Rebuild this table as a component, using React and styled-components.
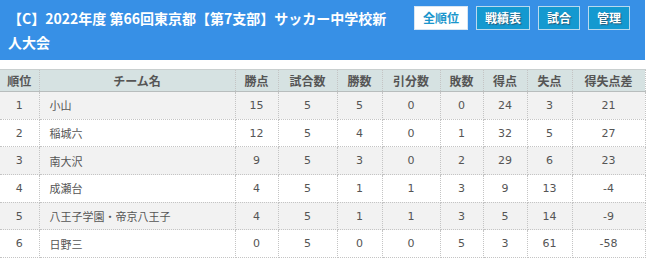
import React from "react";
import styled, { createGlobalStyle } from "styled-components";

const GlobalStyle = createGlobalStyle`
  body {
    margin: 0;
    background: #fff;
    font-family: "DejaVu Sans", "Noto Sans CJK JP", sans-serif;
  }
`;

const Page = styled.div`
  width: 645px;
`;

const TitleBar = styled.div`
  display: flex;
  align-items: flex-start;
  gap: 26px;
  height: 60px;
  box-sizing: border-box;
  padding: 6px 15px 0 8px;
  background: #3790e6;
`;

const Title = styled.h1`
  flex: 1;
  margin: 0;
  font-family: "Noto Sans CJK JP", sans-serif;
  font-size: 14px;
  font-weight: bold;
  line-height: 24px;
  color: #fff;
`;

const Buttons = styled.div`
  display: flex;
  gap: 8px;
  flex-shrink: 0;
`;

const NavButton = styled.a`
  display: block;
  height: 24px;
  box-sizing: border-box;
  padding: 0 8px;
  border: 1px solid ${({ $active }) => ($active ? "#d8e6f2" : "#b9d9ef")};
  background: ${({ $active }) => ($active ? "#fff" : "#1499d0")};
  color: ${({ $active }) => ($active ? "#1a96cc" : "#fff")};
  font-family: "Noto Sans CJK JP", sans-serif;
  font-size: 12px;
  font-weight: bold;
  line-height: 22px;
  text-shadow: ${({ $active }) => ($active ? "none" : "1px 1px 1px #245a78")};
  cursor: pointer;
`;

const Table = styled.table`
  width: 645px;
  margin-top: 9px;
  border-collapse: collapse;
  table-layout: fixed;
  border-top: 1px solid #c9cfcf;
  font-size: 11px;
  color: #555;
`;

const Th = styled.th`
  height: 21px;
  padding: 0;
  background: #d6e2e2;
  border-right: 1px dotted #c4c4c4;
  border-bottom: 1px solid #b8bdbd;
  font-family: "Noto Sans CJK JP", sans-serif;
  font-size: 12px;
  font-weight: bold;
  color: #555;
  text-align: center;
`;

const Row = styled.tr`
  background: ${({ $odd }) => ($odd ? "#f2f2f2" : "#fff")};
`;

const Td = styled.td`
  height: 26.7px;
  padding: ${({ $left }) => ($left ? "0 0 0 10px" : "0")};
  border-right: 1px dotted #c4c4c4;
  border-bottom: 1px dotted #c4c4c4;
  text-align: ${({ $left }) => ($left ? "left" : "center")};
  white-space: nowrap;
`;

const widths = [39, 196, 43, 59, 45, 58, 43, 44, 45, 73];
const heads = ["順位", "チーム名", "勝点", "試合数", "勝数", "引分数", "敗数", "得点", "失点", "得失点差"];

const rows = [
  [1, "小山", 15, 5, 5, 0, 0, 24, 3, 21],
  [2, "稲城六", 12, 5, 4, 0, 1, 32, 5, 27],
  [3, "南大沢", 9, 5, 3, 0, 2, 29, 6, 23],
  [4, "成瀬台", 4, 5, 1, 1, 3, 9, 13, -4],
  [5, "八王子学園・帝京八王子", 4, 5, 1, 1, 3, 5, 14, -9],
  [6, "日野三", 0, 5, 0, 0, 5, 3, 61, -58],
];

const App = () => {
  return (
    <Page>
      <GlobalStyle />
      <TitleBar>
        <Title>【C】2022年度 第66回東京都【第7支部】サッカー中学校新人大会</Title>
        <Buttons>
          <NavButton $active>全順位</NavButton>
          <NavButton>戦績表</NavButton>
          <NavButton>試合</NavButton>
          <NavButton>管理</NavButton>
        </Buttons>
      </TitleBar>
      <Table>
        <colgroup>
          {widths.map((w, i) => (
            <col key={i} style={{ width: w }} />
          ))}
        </colgroup>
        <thead>
          <tr>
            {heads.map((h) => (
              <Th key={h}>{h}</Th>
            ))}
          </tr>
        </thead>
        <tbody>
          {rows.map((r, i) => (
            <Row key={i} $odd={i % 2 === 0}>
              {r.map((v, j) => (
                <Td key={j} $left={j === 1}>
                  {v}
                </Td>
              ))}
            </Row>
          ))}
        </tbody>
      </Table>
    </Page>
  );
};

export default App;
